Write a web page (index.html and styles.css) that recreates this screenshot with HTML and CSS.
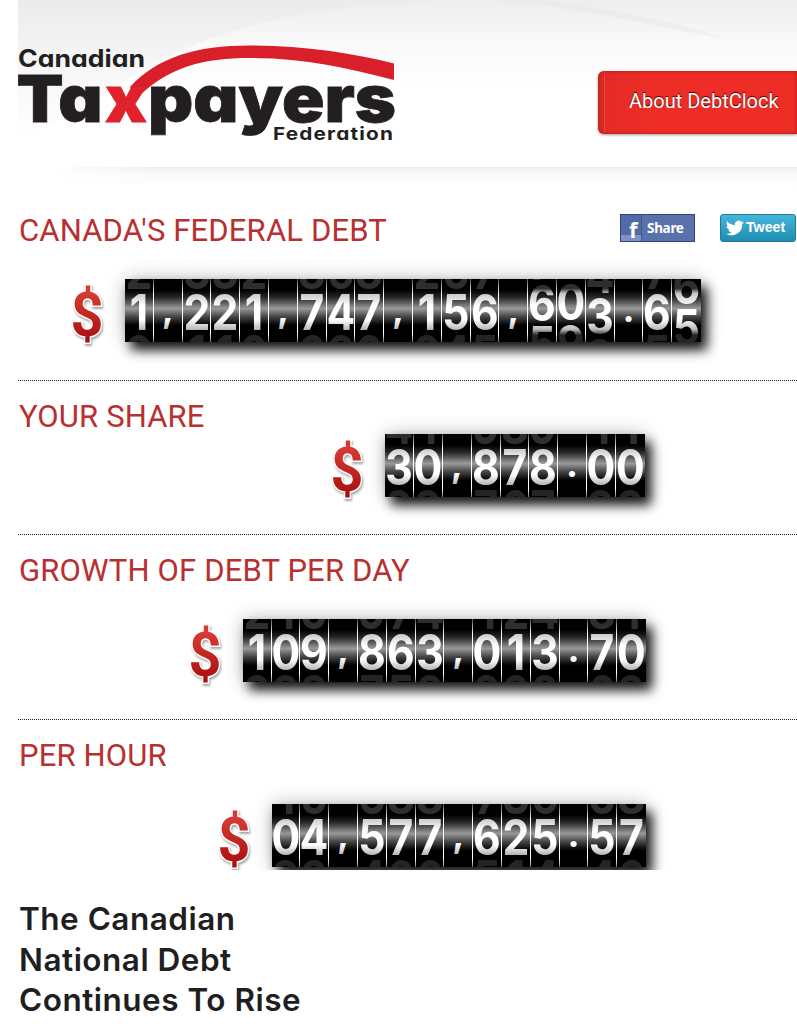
FILE: index.html
```html
<!DOCTYPE html>
<html lang="en">
<head>
    <meta charset="UTF-8">
    <meta name="viewport" content="width=device-width, initial-scale=1.0">
    <title>Debt Clock</title>
    <link rel="stylesheet" href="styles.css">
</head>
<body>
    <header class="header">
        <svg class="header-bg" viewBox="0 0 779 190" width="779" height="190">
            <defs>
                <linearGradient id="fade" x1="0" y1="0" x2="0" y2="1">
                    <stop offset="0" stop-color="#ededed"/>
                    <stop offset="0.5" stop-color="#fafafa"/>
                    <stop offset="1" stop-color="#fff"/>
                </linearGradient>
                <linearGradient id="fadeDark" gradientUnits="userSpaceOnUse" x1="0" y1="0" x2="0" y2="142">
                    <stop offset="0" stop-color="#ebebeb"/>
                    <stop offset="0.4" stop-color="#f5f5f5"/>
                    <stop offset="1" stop-color="#fff"/>
                </linearGradient>
                <linearGradient id="line" x1="0" y1="0" x2="0" y2="1">
                    <stop offset="0" stop-color="#ededed"/>
                    <stop offset="0.3" stop-color="#f9f9f9"/>
                    <stop offset="1" stop-color="#fff"/>
                </linearGradient>
                <linearGradient id="lineFade" x1="0" y1="0" x2="1" y2="0">
                    <stop offset="0" stop-color="#fff"/>
                    <stop offset="1" stop-color="#fff" stop-opacity="0"/>
                </linearGradient>
            </defs>
            <rect width="779" height="90" fill="url(#fade)"/>
            <path d="M0 0H420C300 6 220 24 160 52C100 80 45 125 0 142Z" fill="url(#fadeDark)"/>
            <path d="M520 0C590 8 650 20 705 38C650 30 590 12 480 0Z" fill="#e8e8e8" opacity="0.5"/>
            <rect x="30" y="167" width="749" height="21" fill="url(#line)"/>
            <rect x="30" y="167" width="110" height="21" fill="url(#lineFade)"/>
        </svg>
        <svg class="logo" viewBox="0 0 378 100" width="378" height="100">
            <path d="M112 42C140 12 178 0.500 232 0.500C285 0.500 335 8 376 18.500V35C330 23 285 13 232 13C185 13 150 22 118 54Z" fill="#d81f2a"/>
            <text x="0" y="22" class="logo-small" textLength="127" lengthAdjust="spacingAndGlyphs">Canadian</text>
            <text x="-1.500" y="76.500" class="logo-big" textLength="86" lengthAdjust="spacingAndGlyphs">Ta</text>
            <text x="87" y="76.500" class="logo-big logo-x" textLength="42" lengthAdjust="spacingAndGlyphs">x</text>
            <text x="130" y="76.500" class="logo-big" textLength="248" lengthAdjust="spacingAndGlyphs">payers</text>
            <text x="255" y="94.500" class="logo-fed" textLength="121" lengthAdjust="spacingAndGlyphs">Federation</text>
        </svg>
        <a class="about-button" href="#">About DebtClock</a>
    </header>

    <main class="content">
        <section class="debt debt-federal">
            <div class="debt-head">
                <h2>CANADA'S FEDERAL DEBT</h2>
                <div class="social">
                    <a class="share" href="#"><span class="share-f">f</span><span class="share-label">Share</span></a>
                    <a class="tweet" href="#">
                        <svg viewBox="0 0 24 24" width="18" height="18"><path fill="#fff" d="M24 4.600a10 10 0 0 1-2.800.8 5 5 0 0 0 2.200-2.700 10 10 0 0 1-3.100 1.200 4.900 4.900 0 0 0-8.400 4.500A14 14 0 0 1 1.700 3.100a4.900 4.900 0 0 0 1.500 6.600 5 5 0 0 1-2.200-.6 4.900 4.900 0 0 0 3.900 4.900 5 5 0 0 1-2.200.1 4.900 4.900 0 0 0 4.600 3.400A9.900 9.900 0 0 1 0 19.500 14 14 0 0 0 21.500 7.100 10 10 0 0 0 24 4.600z"/></svg>
                        <span class="tweet-label">Tweet</span>
                    </a>
                </div>
            </div>
            <div class="row"><div class="counter" data-value="1,221,747,156,603.65" data-shift="0,0,0,0,0,0,0,0,0,0,0,0,0,0,-9,-10,4,0,0,15"></div></div>
        </section>
        <section class="debt debt-share">
            <h2>YOUR SHARE</h2>
            <div class="row"><div class="counter" data-value="30,878.00"></div></div>
        </section>
        <section class="debt debt-day">
            <h2>GROWTH OF DEBT PER DAY</h2>
            <div class="row"><div class="counter" data-value="109,863,013.70"></div></div>
        </section>
        <section class="debt debt-hour">
            <h2>PER HOUR</h2>
            <div class="row"><div class="counter" data-value="04,577,625.57"></div></div>
        </section>
        <h1 class="news-title">The Canadian<br>National Debt<br>Continues To Rise</h1>
    </main>

    <script src="script.js"></script>
</body>
</html>
```
FILE: styles.css
```css
* {
    box-sizing: border-box;
}

body {
    margin: 0;
    background: #fff;
    font-family: Roboto, sans-serif;
    overflow: hidden;
}

a {
    text-decoration: none;
}

.header {
    position: relative;
    height: 187px;
    margin-left: 18px;
    display: flex;
    justify-content: space-between;
    align-items: flex-start;
}

.header-bg {
    position: absolute;
    top: 0;
    left: 0;
}

.logo {
    position: relative;
    margin-top: 45px;
}

.logo text {
    font-family: Inter, sans-serif;
    font-feature-settings: "cv11";
    fill: #231f20;
}

.logo .logo-small {
    font-size: 24px;
    font-weight: 700;
}

.logo .logo-big {
    font-size: 65px;
    font-weight: 900;
    stroke: #231f20;
    stroke-width: 0.8px;
}

.logo .logo-x {
    fill: #e0222d;
    stroke: #e0222d;
}

.logo .logo-fed {
    font-size: 18px;
    font-weight: 700;
    letter-spacing: 1px;
}

.about-button {
    position: relative;
    width: 199px;
    height: 63px;
    margin-top: 71px;
    padding-left: 31px;
    border-radius: 6px 0 0 6px;
    background: linear-gradient(90deg, #d92a25 6px, #f0635c 6px, #e42b26 7px, #ef2d27 60px);
    box-shadow: inset 0 0 4px #b51c18, 0 1px 3px rgba(0, 0, 0, 0.4);
    color: #fff;
    font-size: 20px;
    line-height: 60px;
    white-space: nowrap;
    text-shadow: 0 -1px 1px #300;
}

.content {
    margin-left: 18px;
}

.debt {
    border-bottom: 1px dotted #222;
}

.debt h2 {
    margin: 0;
    padding-left: 1px;
    color: #b93030;
    font-size: 31px;
    font-weight: 400;
    line-height: 36px;
    letter-spacing: 0.15px;
}

.debt-head {
    display: flex;
    justify-content: space-between;
    align-items: flex-start;
    height: 36px;
}

.debt-federal {
    height: 194px;
    padding-top: 26px;
}

.debt-share {
    height: 154px;
    padding-top: 18px;
}

.debt-day {
    height: 185px;
    padding-top: 18px;
}

.debt-hour {
    height: 150px;
    padding-top: 18px;
    border: none;
    overflow: hidden;
}

.social {
    display: flex;
    gap: 25px;
    margin-top: 1px;
    margin-right: 1px;
}

.share {
    display: flex;
    width: 75px;
    height: 28px;
    border: 1px solid #2f4580;
    background: #5a72ab;
    color: #fff;
    font-weight: 700;
}

.share-f {
    width: 21px;
    padding-left: 8px;
    border-right: 1px solid #3f5793;
    background: linear-gradient(#536ba5 20px, #7f93c2 20px);
    font-family: "Open Sans", sans-serif;
    font-size: 22px;
    line-height: 29px;
}

.share-label {
    padding-left: 5px;
    font-family: "Noto Sans", sans-serif;
    font-size: 13.500px;
    line-height: 27px;
    letter-spacing: -0.3px;
}

.tweet {
    display: flex;
    align-items: center;
    gap: 2px;
    width: 76px;
    height: 28px;
    padding-left: 5px;
    border: 1px solid #1b7c9e;
    border-radius: 3px;
    background: linear-gradient(#46b5d8, #1f8db3);
    color: #fff;
    font-family: "Liberation Sans", sans-serif;
    font-size: 14.200px;
    font-weight: 700;
}

.tweet-label {
    padding-bottom: 2px;
}

/* rows end where the counters line up on the right */
.row {
    display: flex;
    justify-content: flex-end;
    align-items: flex-start;
    width: 628px;
    margin-top: 30px;
}

.debt-federal .row {
    width: 683px;
}

.debt-share .row {
    width: 626.500px;
    margin-top: -1px;
}

.dollar {
    width: 44px;
    height: 70px;
    margin-right: 13px;
    overflow: visible;
    filter: drop-shadow(1px 2px 1px rgba(0, 0, 0, 0.35));
}

.dollar text {
    font-family: Roboto, sans-serif;
    font-size: 61px;
    font-weight: 700;
    stroke: #fff;
    stroke-width: 3px;
    paint-order: stroke;
}

.counter {
    display: flex;
    height: 63px;
    background: #000;
    box-shadow: 6px 8px 11px rgba(0, 0, 0, 0.9), 0 0 18px rgba(0, 0, 0, 0.25);
}

.cell {
    position: relative;
    width: 28.800px;
    height: 63px;
    overflow: hidden;
    background: linear-gradient(#000 16%, #2a2a2a 28%, #999 47%, #444 60%, #000 74%);
    border-right: 1px solid;
    border-image: linear-gradient(#444, #fff 25%, #fff 85%, #666) 1;
    color: #fff;
    font-family: Inter, sans-serif;
    font-size: 49px;
    font-weight: 700;
    text-align: center;
}

.cell:last-child {
    border-right-width: 0;
}

.reel {
    margin: -28px -6px 0;
}

.reel span {
    display: block;
    height: 41px;
    line-height: 41px;
    transform: scaleX(0.87);
}

.mark {
    padding-top: 9px;
    font-size: 36px;
    line-height: 42px;
}

/* dark curve of the drum */
.cell::after {
    content: "";
    position: absolute;
    inset: 0;
    background: linear-gradient(rgba(0, 0, 0, 0.82) 15%, rgba(0, 0, 0, 0.22) 23%, rgba(0, 0, 0, 0) 42%, rgba(0, 0, 0, 0) 64%, rgba(0, 0, 0, 0.28) 80%, rgba(0, 0, 0, 0.86) 89%);
}

.news-title {
    margin: 29px 0 0 1px;
    color: #1f1f1f;
    font-family: Inter, sans-serif;
    font-size: 31.500px;
    font-weight: 600;
    line-height: 40.500px;
    letter-spacing: 0.5px;
}
```
FILE: script.js
```js
const counters = document.querySelectorAll('.counter');

const dollar = `
    <svg class="dollar" viewBox="0 0 44 70">
        <defs>
            <linearGradient id="red" x1="0" y1="0" x2="0" y2="1">
                <stop offset="0.2" stop-color="#d63a32"/>
                <stop offset="0.85" stop-color="#a80f0f"/>
            </linearGradient>
        </defs>
        <text x="2.500" y="57" fill="url(#red)" textLength="33" lengthAdjust="spacingAndGlyphs">$</text>
    </svg>`;

counters.forEach(counter => {
    const shifts = (counter.dataset.shift || '').split(',');
    let html = '';

    counter.dataset.value.split('').forEach((char, i) => {
        if (char === ',' || char === '.') {
            html += `<div class="cell mark">${char}</div>`;
            return;
        }
        // each reel shows the next digit above and the previous one below
        const n = parseInt(char);
        const shift = shifts[i] || 0;
        html += `<div class="cell"><div class="reel" style="transform: translateY(${shift}px)">
            <span>${(n + 1) % 10}</span><span>${n}</span><span>${(n + 9) % 10}</span></div></div>`;
    });

    counter.innerHTML = html;
    counter.insertAdjacentHTML('beforebegin', dollar);
});
```
